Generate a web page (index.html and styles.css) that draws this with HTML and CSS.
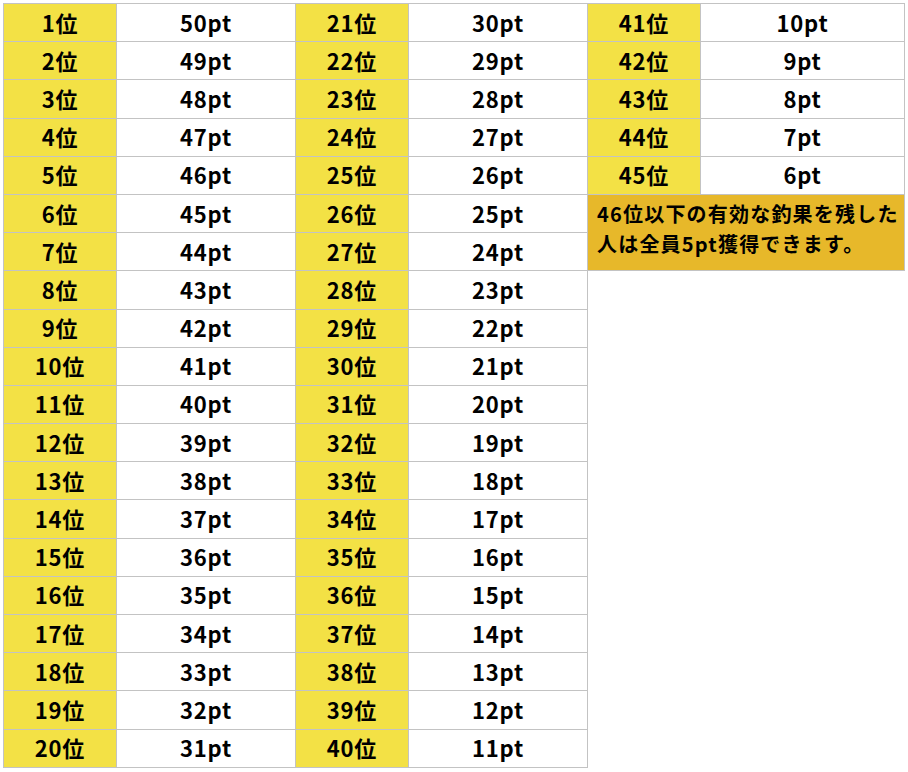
FILE: index.html
```html
<!DOCTYPE html>
<html lang="ja">
<head>
<meta charset="utf-8">
<title>順位ポイント表</title>
<link rel="stylesheet" href="styles.css">
</head>
<body>
<div class="board">
  <div class="table first">
    <div class="rank">1位</div><div class="pt">50pt</div>
    <div class="rank">2位</div><div class="pt">49pt</div>
    <div class="rank">3位</div><div class="pt">48pt</div>
    <div class="rank">4位</div><div class="pt">47pt</div>
    <div class="rank">5位</div><div class="pt">46pt</div>
    <div class="rank">6位</div><div class="pt">45pt</div>
    <div class="rank">7位</div><div class="pt">44pt</div>
    <div class="rank">8位</div><div class="pt">43pt</div>
    <div class="rank">9位</div><div class="pt">42pt</div>
    <div class="rank">10位</div><div class="pt">41pt</div>
    <div class="rank">11位</div><div class="pt">40pt</div>
    <div class="rank">12位</div><div class="pt">39pt</div>
    <div class="rank">13位</div><div class="pt">38pt</div>
    <div class="rank">14位</div><div class="pt">37pt</div>
    <div class="rank">15位</div><div class="pt">36pt</div>
    <div class="rank">16位</div><div class="pt">35pt</div>
    <div class="rank">17位</div><div class="pt">34pt</div>
    <div class="rank">18位</div><div class="pt">33pt</div>
    <div class="rank">19位</div><div class="pt">32pt</div>
    <div class="rank">20位</div><div class="pt">31pt</div>
  </div>
  <div class="table">
    <div class="rank">21位</div><div class="pt">30pt</div>
    <div class="rank">22位</div><div class="pt">29pt</div>
    <div class="rank">23位</div><div class="pt">28pt</div>
    <div class="rank">24位</div><div class="pt">27pt</div>
    <div class="rank">25位</div><div class="pt">26pt</div>
    <div class="rank">26位</div><div class="pt">25pt</div>
    <div class="rank">27位</div><div class="pt">24pt</div>
    <div class="rank">28位</div><div class="pt">23pt</div>
    <div class="rank">29位</div><div class="pt">22pt</div>
    <div class="rank">30位</div><div class="pt">21pt</div>
    <div class="rank">31位</div><div class="pt">20pt</div>
    <div class="rank">32位</div><div class="pt">19pt</div>
    <div class="rank">33位</div><div class="pt">18pt</div>
    <div class="rank">34位</div><div class="pt">17pt</div>
    <div class="rank">35位</div><div class="pt">16pt</div>
    <div class="rank">36位</div><div class="pt">15pt</div>
    <div class="rank">37位</div><div class="pt">14pt</div>
    <div class="rank">38位</div><div class="pt">13pt</div>
    <div class="rank">39位</div><div class="pt">12pt</div>
    <div class="rank">40位</div><div class="pt">11pt</div>
  </div>
  <div class="table last">
    <div class="rank">41位</div><div class="pt">10pt</div>
    <div class="rank">42位</div><div class="pt">9pt</div>
    <div class="rank">43位</div><div class="pt">8pt</div>
    <div class="rank">44位</div><div class="pt">7pt</div>
    <div class="rank">45位</div><div class="pt">6pt</div>
    <div class="note">46位以下の有効な釣果を残した<br>人は全員5pt獲得できます。</div>
  </div>
</div>
</body>
</html>
```

FILE: styles.css
```css
html, body {
  margin: 0;
  padding: 0;
  background: #ffffff;
}

body {
  font-family: "Noto Sans CJK JP", "Noto Sans", sans-serif;
  font-weight: 700;
  color: #000000;
}

.board {
  display: flex;
  align-items: flex-start;
  padding: 3px 0 0 3px;
}

.table {
  display: grid;
  grid-template-columns: 113px 179px;
  grid-auto-rows: 38.2px;
  border-top: 1px solid #c3c3c3;
}

.table.first {
  border-left: 1px solid #c3c3c3;
}

.table.last {
  grid-template-columns: 113px 204px;
}

.rank,
.pt {
  box-sizing: border-box;
  border-right: 1px solid #c3c3c3;
  border-bottom: 1px solid #c3c3c3;
  display: flex;
  align-items: center;
  justify-content: center;
  font-size: 22px;
  letter-spacing: 0.8px;
  line-height: 1;
  padding-bottom: 2px;
}

.rank {
  background: #f3e145;
}

.pt {
  background: #ffffff;
}

.note {
  grid-column: 1 / 3;
  grid-row: span 2;
  box-sizing: border-box;
  background: #e7b82a;
  border-right: 1px solid #c3c3c3;
  border-bottom: 1px solid #c3c3c3;
  font-size: 20px;
  letter-spacing: 1.2px;
  line-height: 30px;
  white-space: nowrap;
  padding: 4px 0 0 9px;
}
```
